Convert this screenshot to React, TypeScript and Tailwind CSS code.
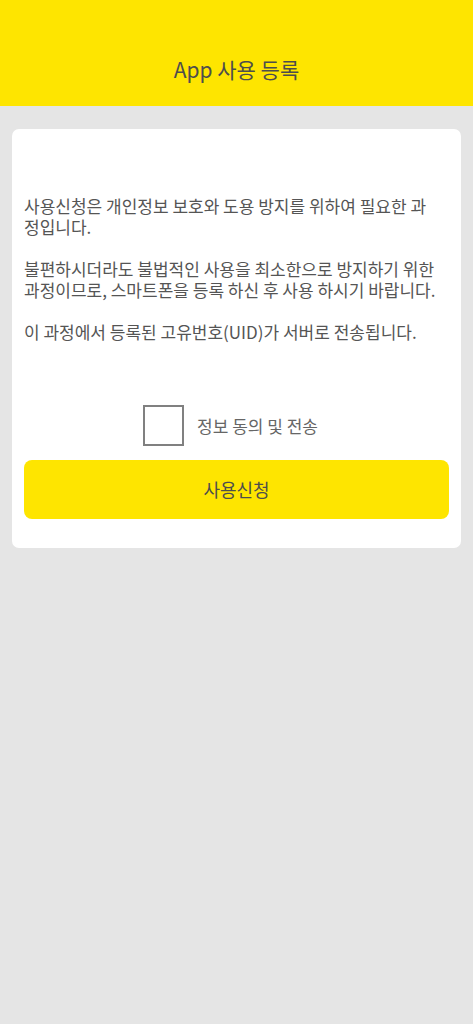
import { useState } from "react";

const paragraphs = [
    "사용신청은 개인정보 보호와 도용 방지를 위하여 필요한 과정입니다.",
    "불편하시더라도 불법적인 사용을 최소한으로 방지하기 위한 과정이므로, 스마트폰을 등록 하신 후 사용 하시기 바랍니다.",
    "이 과정에서 등록된 고유번호(UID)가 서버로 전송됩니다.",
];

export default function App() {
    const [agreed, setAgreed] = useState(false);

    return (
        <div className="min-h-[1024px] w-full bg-[#e5e5e5] font-['Noto_Sans_CJK_KR','Noto_Sans',sans-serif]">
            <header className="h-[106px] bg-[#fee500] flex items-end justify-center pb-[22px]">
                <h1 className="text-[21px] leading-[30px] text-[#4d4d4d]">App 사용 등록</h1>
            </header>

            <main className="px-3 pt-[23px]">
                <section className="bg-white rounded-[7px] px-3 pt-[66px] pb-[29px]">
                    <div className="pr-[10px] space-y-[21px] text-[17px] leading-[21px] text-[#555555]">
                        {paragraphs.map((text, index) => (
                            <p key={index}>{text}</p>
                        ))}
                    </div>

                    <label className="mt-[63px] pr-[12px] flex items-center justify-center gap-[13px] cursor-pointer">
                        <button
                            type="button"
                            onClick={() => setAgreed(!agreed)}
                            className="w-[41px] h-[41px] border-2 border-[#808080] bg-white flex items-center justify-center"
                        >
                            {agreed && <span className="text-[#555] text-xl">✓</span>}
                        </button>
                        <span className="text-[17px] text-[#666666]">정보 동의 및 전송</span>
                    </label>

                    <button
                        type="button"
                        className="mt-[14px] w-full h-[59px] rounded-[8px] bg-[#fee500] text-[18px] text-[#4d4d4d]"
                    >
                        사용신청
                    </button>
                </section>
            </main>
        </div>
    );
}
